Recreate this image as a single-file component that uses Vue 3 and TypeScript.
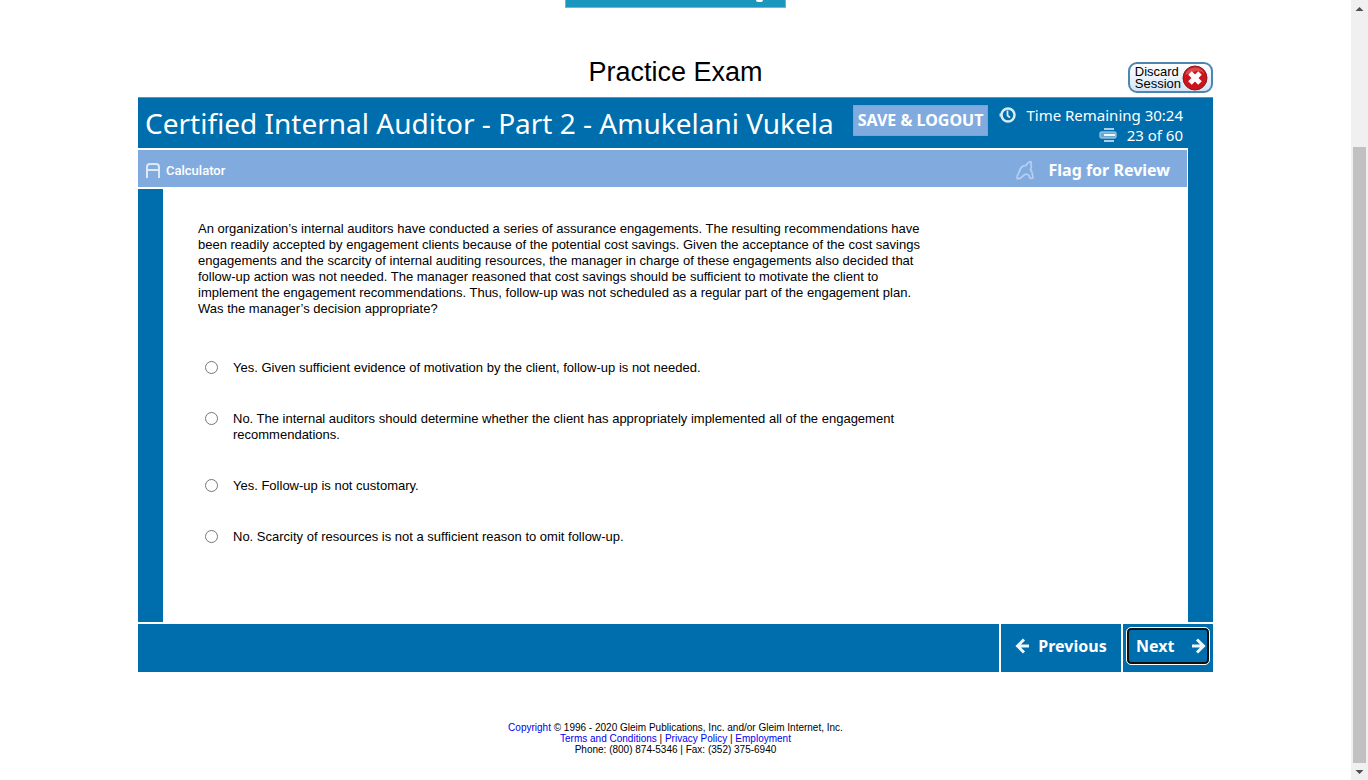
<script setup lang="ts">
import { ref } from 'vue'

interface Choice {
  id: string
  text: string
}

const choices: Choice[] = [
  { id: 'a', text: 'Yes. Given sufficient evidence of motivation by the client, follow-up is not needed.' },
  { id: 'b', text: 'No. The internal auditors should determine whether the client has appropriately implemented all of the engagement recommendations.' },
  { id: 'c', text: 'Yes. Follow-up is not customary.' },
  { id: 'd', text: 'No. Scarcity of resources is not a sufficient reason to omit follow-up.' },
]
const selected = ref<string>('')
const current = ref<number>(23)
const total = 60
</script>

<template>
  <div class="page">
    <main class="content">
      <div class="banner"><span class="banner-mark"></span></div>
      <div class="exam">
        <div class="title-row">
          <h1>Practice Exam</h1>
          <button type="button" class="discard">
            <span>Discard<br>Session</span>
            <svg width="26" height="26" viewBox="0 0 26 26" aria-hidden="true">
              <circle cx="13" cy="13" r="12" fill="#c9151b" stroke="#8f1a22" />
              <path d="M3 10a10.500 10.500 0 0 1 19.500-1.500q-3-3-7.500-2.500-6 1-12 4z" fill="#dd4a4d" />
              <path d="M8 8l10 10M18 8L8 18" stroke="#fff" stroke-width="5" />
            </svg>
          </button>
        </div>

        <header class="exam-header">
          <h2>Certified Internal Auditor - Part 2 - Amukelani Vukela</h2>
          <button type="button" class="save">SAVE &amp; LOGOUT</button>
          <div class="status">
            <div class="status-line">
              <svg width="17" height="18" viewBox="0 0 17 18" fill="none" stroke="#d9ebf6" aria-hidden="true">
                <circle cx="9" cy="9" r="6.500" stroke-width="2.500" />
                <path d="M8.500 4.500v5l2.500 2" stroke-width="1.800" />
                <path d="M.5 9h2" stroke-width="3" />
              </svg>
              <span>Time Remaining 30:24</span>
            </div>
            <div class="status-line">
              <svg width="18" height="14" viewBox="0 0 18 14" fill="none" aria-hidden="true">
                <path d="M5 1h10M5 13h10" stroke="#a9d0e8" stroke-width="2" />
                <rect x="1" y="4" width="16" height="6" rx="2" fill="#69a9d0" stroke="#8fc0df" stroke-width="1.500" />
                <path d="M5 7h11" stroke="#f0f8fd" stroke-width="2" />
              </svg>
              <span>{{ current }} of {{ total }}</span>
            </div>
          </div>
        </header>

        <div class="frame">
          <div class="frame-main">
            <nav class="toolbar">
              <button type="button" class="calculator">
                <svg width="14" height="15" viewBox="0 0 14 15" fill="none" stroke="#dbe9fa" stroke-width="2" aria-hidden="true">
                  <path d="M1 15V4q0-3 3-3h6q3 0 3 3v11M1 7h12" />
                </svg>
                <span>Calculator</span>
              </button>
              <button type="button" class="flag">
                <svg width="20" height="20" viewBox="0 0 20 20" fill="none" stroke="#b5d0f2" stroke-width="1.700" stroke-linejoin="round" aria-hidden="true">
                  <path d="M2 18.500Q2 15 4 12.500 5 8 8 6l3-.5Q12 2.500 16 1.500q-.5 2.500.5 5l-1 3q2 3 2 5.500l.5 3-2.500.5q-1.500-1-1.500-3-2-2-4-1-2 1-3.500 3Q4.500 19 2 18.500z" />
                </svg>
                <span>Flag for Review</span>
              </button>
            </nav>
            <section class="question">
              <p class="stem">An organization’s internal auditors have conducted a series of assurance engagements. The resulting recommendations have been readily accepted by engagement clients because of the potential cost savings. Given the acceptance of the cost savings engagements and the scarcity of internal auditing resources, the manager in charge of these engagements also decided that follow-up action was not needed. The manager reasoned that cost savings should be sufficient to motivate the client to implement the engagement recommendations. Thus, follow-up was not scheduled as a regular part of the engagement plan. Was the manager’s decision appropriate?</p>
              <div class="choices">
                <label v-for="c in choices" :key="c.id" class="choice" :for="'choice-' + c.id">
                  <input :id="'choice-' + c.id" v-model="selected" type="radio" name="answer" :value="c.id">
                  <span>{{ c.text }}</span>
                </label>
              </div>
            </section>
          </div>
          <div class="frame-side"></div>
        </div>

        <div class="pager">
          <div class="pager-fill"></div>
          <button type="button" class="previous" @click="current = Math.max(1, current - 1)">
            <svg width="15" height="18" viewBox="0 0 15 18" fill="none" stroke="#eef7fc" stroke-width="3" aria-hidden="true">
              <path d="M14 9H3M9 2.500L2.500 9 9 15.500" />
            </svg>
            <span>Previous</span>
          </button>
          <div class="next-cell">
            <button type="button" class="next" @click="current = Math.min(total, current + 1)">
              <span>Next</span>
              <svg width="15" height="18" viewBox="0 0 15 18" fill="none" stroke="#eef7fc" stroke-width="3" aria-hidden="true">
                <path d="M1 9h11M6 2.500L12.500 9 6 15.500" />
              </svg>
            </button>
          </div>
        </div>
      </div>

      <footer class="legal">
        <div><a href="#copyright">Copyright</a> © 1996 - 2020 Gleim Publications, Inc. and/or Gleim Internet, Inc.</div>
        <div><a href="#terms">Terms and Conditions</a> | <a href="#privacy">Privacy Policy</a> | <a href="#employment">Employment</a></div>
        <div>Phone: (800) 874-5346 | Fax: (352) 375-6940</div>
      </footer>
    </main>

    <div class="scrollbar" aria-hidden="true">
      <svg width="17" height="17" viewBox="0 0 17 17"><path d="M4.500 11l4-4 4 4z" fill="#505050" /></svg>
      <div class="track"><div class="thumb"></div></div>
      <svg width="17" height="17" viewBox="0 0 17 17"><path d="M4.500 7l4 4 4-4z" fill="#505050" /></svg>
    </div>
  </div>
</template>

<style>
body {
  margin: 0;
  background: #fff;
}
</style>

<style scoped>
.page {
  display: flex;
  min-height: 100vh;
  font-family: "Liberation Sans", Arial, sans-serif;
  color: #000;
}
.content {
  flex: 1;
  min-width: 0;
}
button {
  border: 0;
  margin: 0;
  padding: 0;
  background: none;
  font-family: "Noto Sans", Tahoma, sans-serif;
  color: #fff;
  cursor: pointer;
}
svg {
  display: block;
  flex: none;
}
.banner {
  box-sizing: border-box;
  display: flex;
  justify-content: flex-end;
  width: 221px;
  height: 8px;
  margin: 0 auto;
  padding-right: 22px;
  background: #1b97be;
  border: 1px solid #62bcd8;
  border-top: 0;
}
.banner-mark {
  width: 7px;
  height: 2px;
  background: #fff;
  border-radius: 0 0 3px 3px;
}
.exam {
  max-width: 1075px;
  margin: 0 auto;
}
.title-row {
  display: grid;
  grid-template-columns: 1fr auto 1fr;
  align-items: end;
  height: 89px;
}
h1 {
  grid-column: 2;
  margin: 0 0 9px;
  font-size: 27px;
  line-height: 32px;
  font-weight: 400;
}
.discard {
  justify-self: end;
  box-sizing: border-box;
  display: flex;
  align-items: center;
  gap: 1px;
  height: 31px;
  margin: 0 0 4px;
  padding: 0 3px 0 5px;
  border: 2px solid #4d86b0;
  border-radius: 9px;
  background: linear-gradient(#fff, #d5e5f5);
  font-family: "Liberation Sans", Arial, sans-serif;
  font-size: 13px;
  line-height: 12px;
  text-align: left;
  color: #000;
}
.exam-header {
  box-sizing: border-box;
  display: flex;
  align-items: center;
  height: 51px;
  padding: 0 30px 0 7px;
  background: #006dac;
  color: #fff;
  font-family: "Noto Sans", Tahoma, sans-serif;
  border-top: 1px solid #4b98c5;
}
h2 {
  flex: 1;
  margin: 0;
  font-size: 28px;
  line-height: 50px;
  font-weight: 400;
  white-space: nowrap;
}
.save {
  height: 31px;
  margin: 0 11px 6px 0;
  padding: 0 4px;
  border: 1px solid #6fa8d8;
  background: #81abdf;
  font-size: 16px;
  font-weight: 700;
}
.status {
  padding-top: 3px;
  font-size: 15px;
  line-height: 20px;
  white-space: nowrap;
}
.status-line {
  display: flex;
  align-items: center;
  justify-content: flex-end;
  gap: 10px;
}
.frame {
  display: grid;
  grid-template-columns: 1fr 25px;
}
.frame-side {
  background: #006dac;
}
.toolbar {
  box-sizing: border-box;
  display: flex;
  align-items: center;
  justify-content: space-between;
  height: 37px;
  margin: 2px 1px 2px 0;
  padding: 3px 17px 0 8px;
  background: #81abdf;
}
.toolbar button {
  display: flex;
  align-items: center;
}
.calculator {
  gap: 6px;
  font-family: Roboto, Arial, sans-serif;
  font-size: 13px;
  font-weight: 500;
}
.flag {
  gap: 14px;
  font-size: 16px;
  line-height: 24px;
  font-weight: 700;
}
.question {
  box-sizing: border-box;
  min-height: 433px;
  padding: 32px 35px 60px;
  border-left: 25px solid #006dac;
}
.stem {
  max-width: 728px;
  margin: 0;
  font-size: 13px;
  line-height: 16px;
}
.choices {
  display: flex;
  flex-direction: column;
  gap: 35px;
  max-width: 720px;
  margin-top: 43px;
}
.choice {
  display: flex;
  align-items: flex-start;
  gap: 15px;
  padding-left: 7px;
  font-size: 13px;
  line-height: 16px;
}
.choice input {
  flex: none;
  width: 13px;
  height: 13px;
  margin: 1px 0 0;
}
.pager {
  display: grid;
  grid-template-columns: 1fr 120px 90px;
  gap: 2px;
  height: 48px;
  margin-top: 2px;
}
.pager > * {
  background: #006dac;
}
.pager button {
  display: flex;
  align-items: center;
  font-size: 16px;
  line-height: 24px;
  font-weight: 700;
}
.pager .previous {
  justify-content: center;
  gap: 8px;
  padding-bottom: 4px;
}
.next-cell {
  display: flex;
  padding: 4px;
}
.pager .next {
  flex: 1;
  justify-content: space-between;
  height: 36px;
  padding: 0 1px 0 7px;
  border: 2px solid #101010;
  border-radius: 4px;
  outline: 1px solid #fff;
}
.legal {
  padding-top: 50px;
  font-size: 10px;
  line-height: 11px;
  text-align: center;
}
.legal a {
  color: #0000ee;
  text-decoration: none;
}
.scrollbar {
  display: flex;
  flex-direction: column;
  width: 17px;
  height: 100vh;
  background: #f0f0f0;
}
.track {
  flex: 1;
  display: flex;
  align-items: flex-end;
}
.thumb {
  width: 13px;
  height: 82.6%;
  margin: 0 2px;
  background: #c1c1c1;
}
</style>
